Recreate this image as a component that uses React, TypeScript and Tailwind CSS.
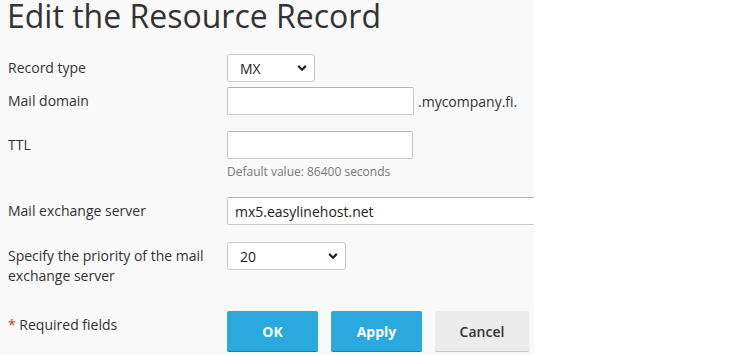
import React from 'react';

const font = { fontFamily: '"Open Sans", "Liberation Sans", sans-serif' };

function Chevron() {
  return (
    <svg className="pointer-events-none absolute right-[8px] top-1/2 -translate-y-1/2" width="10" height="7" viewBox="0 0 10 7">
      <path d="M1.2 1.4 L5 5.2 L8.8 1.4" fill="none" stroke="#222" strokeWidth="2.2" />
    </svg>
  );
}

function Select({ value, width }: { value: string; width: string }) {
  return (
    <div className={`relative h-[28px] ${width}`}>
      <select
        defaultValue={value}
        className="h-full w-full appearance-none rounded-[3px] border border-[#c8c8c8] bg-white pl-[12px] text-[14px] text-[#222] outline-none"
        style={font}
      >
        <option>{value}</option>
      </select>
      <Chevron />
    </div>
  );
}

function Field({ label, children }: { label: React.ReactNode; children: React.ReactNode }) {
  return (
    <div className="flex items-start">
      <div className="w-[219px] shrink-0 pt-[4px] pr-[10px] text-[14px] leading-[20px] text-[#333]">{label}</div>
      <div className="min-w-0 flex-1">{children}</div>
    </div>
  );
}

const inputCls =
  'h-[28px] rounded-[2px] border border-[#c8c8c8] border-t-[#b4b4b4] bg-white px-[7px] text-[14px] text-[#222] outline-none';

export default function App() {
  return (
    <div className="flex h-[355px] w-[750px] bg-white" style={font}>
      <div className="h-full w-[534px] overflow-hidden bg-[#f9f9f9] pl-[8px]">
        <h1 className="ml-[-1px] text-[32px] leading-[32px] text-[#333]">Edit the Resource Record</h1>

        <div className="mt-[22px] flex flex-col">
          <Field label="Record type">
            <Select value="MX" width="w-[88px]" />
          </Field>

          <div className="mt-[5px]">
            <Field label="Mail domain">
              <div className="flex items-center">
                <input className={`${inputCls} w-[187px]`} style={font} />
                <span className="ml-[4px] text-[14px] text-[#333]">.mycompany.fi.</span>
              </div>
            </Field>
          </div>

          <div className="mt-[16px]">
            <Field label="TTL">
              <input className={`${inputCls} w-[186px]`} style={font} />
              <div className="mt-[5px] text-[12px] leading-[16px] text-[#777]">Default value: 86400 seconds</div>
            </Field>
          </div>

          <div className="mt-[17px]">
            <Field label="Mail exchange server">
              <input className={`${inputCls} w-[330px]`} defaultValue="mx5.easylinehost.net" style={font} />
            </Field>
          </div>

          <div className="mt-[17px]">
            <Field label="Specify the priority of the mail exchange server">
              <Select value="20" width="w-[119px]" />
            </Field>
          </div>

          <div className="mt-[25px] flex items-start">
            <div className="w-[219px] shrink-0 pt-[4px] text-[14px] leading-[20px] text-[#333]">
              <span className="text-[#d9302c]">*</span> Required fields
            </div>
            <div className="flex gap-[13px]">
              <button className="h-[40px] w-[91px] rounded-[2px] bg-[#29a9dd] text-[14px] font-bold text-white shadow-[0_1px_0_#1c7fa8]">
                OK
              </button>
              <button className="h-[40px] w-[91px] rounded-[2px] bg-[#29a9dd] text-[14px] font-bold text-white shadow-[0_1px_0_#1c7fa8]">
                Apply
              </button>
              <button className="h-[40px] w-[94px] rounded-[2px] bg-[#ececec] text-[14px] font-semibold text-[#333] shadow-[0_1px_0_#c4c4c4]">
                Cancel
              </button>
            </div>
          </div>
        </div>
      </div>
    </div>
  );
}
